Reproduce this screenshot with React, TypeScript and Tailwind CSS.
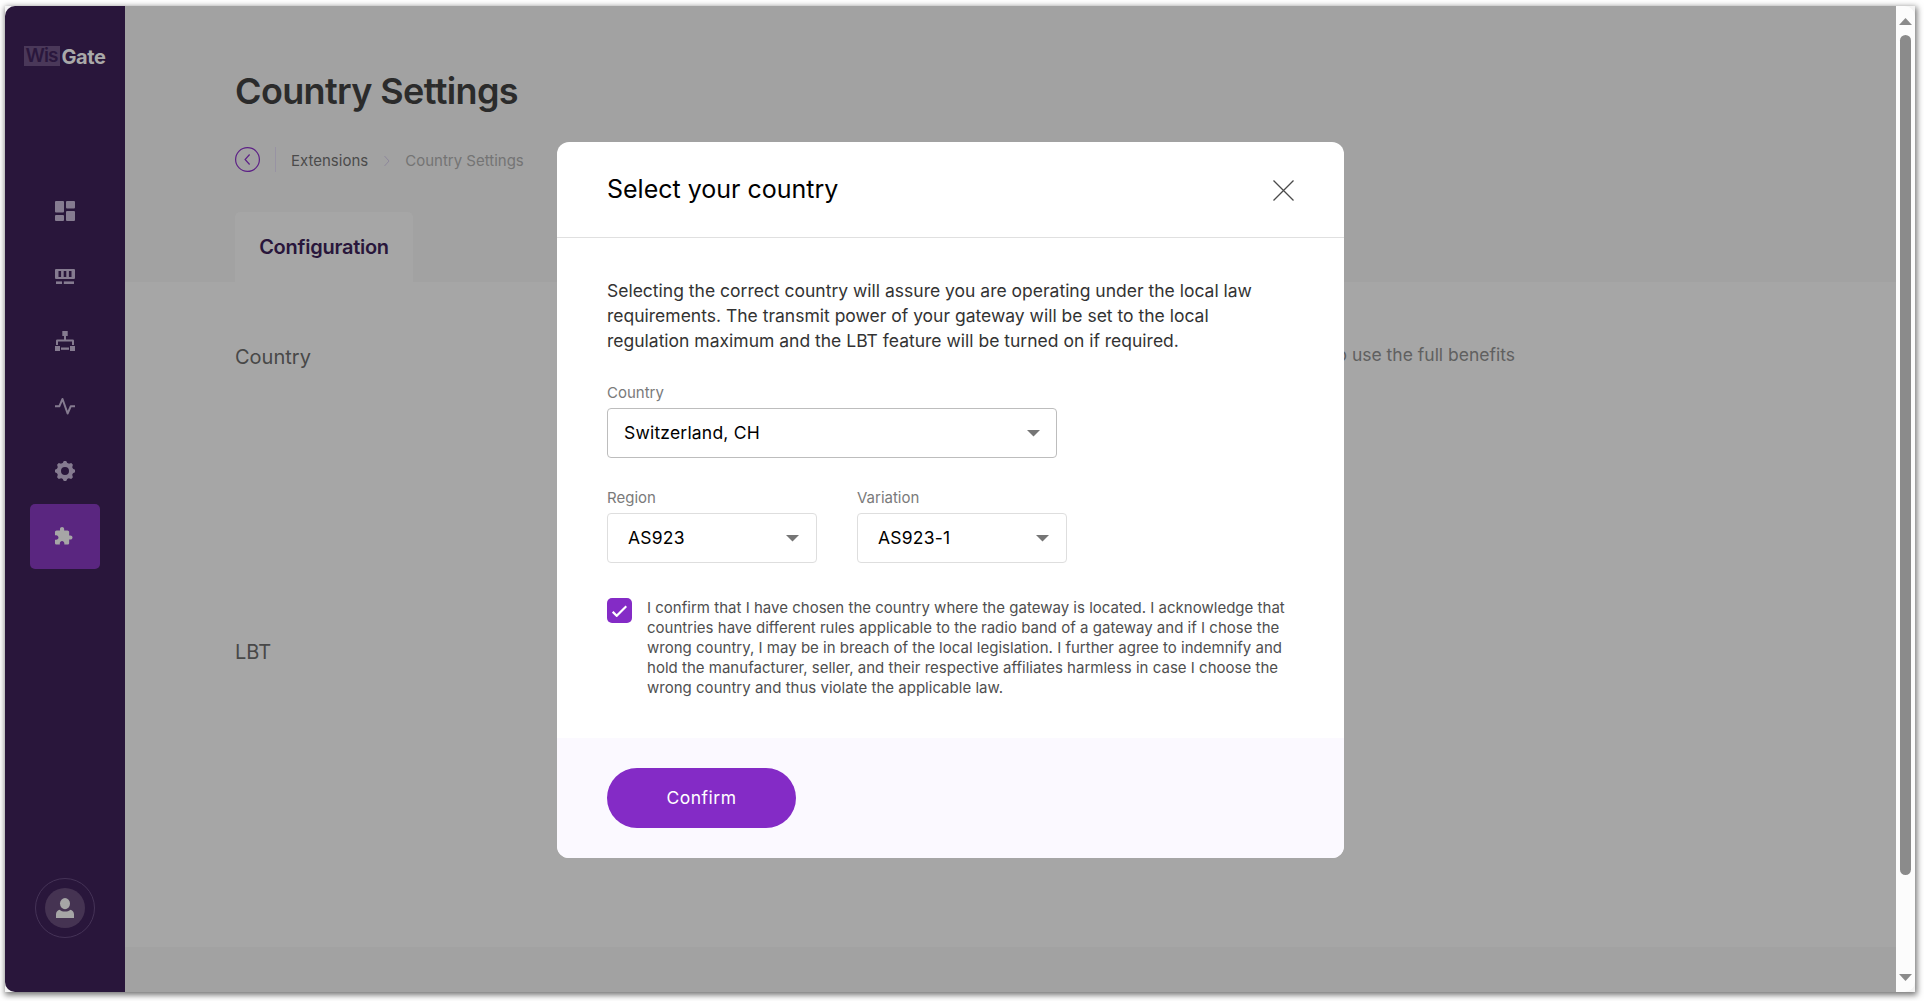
import React from "react";

function NavTile({ active = false, children }: { active?: boolean; children: React.ReactNode }) {
  return (
    <a
      className={
        active
          ? "block h-[65px] w-[70px] rounded-[5px] bg-[#5a2680] text-[#a6a6a6]"
          : "block h-[65px] w-[70px] text-[#857b90]"
      }
    >
      <svg viewBox="0 0 70 65" width="70" height="65" fill="currentColor">
        {children}
      </svg>
    </a>
  );
}

function Sidebar() {
  return (
    <aside className="flex w-[120px] shrink-0 flex-col items-center bg-[#29163b]">
      <div className="mt-[40px] flex h-5 w-[83px] items-center text-[19px] leading-5">
        <span className="flex h-5 w-[36px] shrink-0 items-center justify-center bg-[#4a3859] font-semibold tracking-[-0.9px] text-[#2a173d]">
          Wis
        </span>
        <span className="relative top-px ml-[2px] text-[20px] font-bold tracking-[-0.4px] text-[#a9a9a9]">Gate</span>
      </div>

      <nav className="mt-[113px] flex flex-col">
        <NavTile>
          <rect x="25" y="22" width="9" height="11.5" rx="1" />
          <rect x="25" y="36" width="9" height="6" rx="1" />
          <rect x="36" y="22" width="9" height="7.5" rx="1" />
          <rect x="36" y="32" width="9" height="10" rx="1" />
        </NavTile>
        <NavTile>
          <path
            fillRule="evenodd"
            d="M26 25h18a1 1 0 0 1 1 1v8a1 1 0 0 1-1 1H26a1 1 0 0 1-1-1v-8a1 1 0 0 1 1-1zM28.5 27v6h2.6v-6zM33.7 27v6h2.6v-6zM38.9 27v6h2.6v-6z"
          />
          <rect x="26" y="37.4" width="6" height="2.6" />
          <rect x="33.8" y="37.4" width="10.2" height="2.6" />
        </NavTile>
        <NavTile>
          <rect x="32.3" y="22" width="5.4" height="5" />
          <rect x="34" y="27" width="2" height="5" />
          <path d="M26 36v-4.2q0-1.3 1.3-1.3h15.4q1.3 0 1.3 1.3V36h-2v-3.5H28V36z" />
          <rect x="25" y="37" width="5" height="5" />
          <rect x="40" y="37" width="5" height="5" />
          <rect x="31" y="38.5" width="8" height="2.3" />
        </NavTile>
        <NavTile>
          <polyline
            points="25,32.3 29.3,32.3 32.5,25 37.6,39.5 40.7,32.3 45,32.3"
            fill="none"
            stroke="currentColor"
            strokeWidth="2"
            strokeLinejoin="round"
          />
        </NavTile>
        <NavTile>
          <circle cx="35" cy="32" r="6.1" fill="none" stroke="currentColor" strokeWidth="4.2" />
          {[0, 45, 90, 135, 180, 225, 270, 315].map((angle) => (
            <path key={angle} transform={`rotate(${angle} 35 32)`} d="M32.2 25l1.6-3h2.4l1.6 3z" />
          ))}
        </NavTile>
        <NavTile active>
          <path
            transform="translate(23.3 22.2) scale(0.835)"
            d="M20.5 11H19V7c0-1.1-.9-2-2-2h-4V3.5C13 2.12 11.88 1 10.5 1S8 2.12 8 3.5V5H4c-1.1 0-1.99.9-1.99 2v3.8H3.5c1.49 0 2.7 1.21 2.7 2.7s-1.21 2.7-2.7 2.7H2V20c0 1.1.9 2 2 2h3.8v-1.5c0-1.49 1.21-2.7 2.7-2.7 1.49 0 2.7 1.21 2.7 2.7V22H17c1.1 0 2-.9 2-2v-4h1.5c1.38 0 2.5-1.12 2.5-2.5S21.88 11 20.5 11z"
          />
        </NavTile>
      </nav>

      <div className="mt-auto mb-[54px] flex size-[60px] items-center justify-center rounded-full border border-[#453357]">
        <div className="flex size-10 items-center justify-center rounded-full bg-[#453352]">
          <svg viewBox="0 0 18 20" width="18" height="20" fill="#a6a6a6">
            <ellipse cx="9" cy="5.6" rx="5" ry="5.6" />
            <path d="M0 20v-3.5c0-2.6 1.3-4.2 3.4-4.8 1.6 1.3 3.5 1.9 5.6 1.9s4-.6 5.6-1.9c2.1.6 3.4 2.2 3.4 4.8V20z" />
          </svg>
        </div>
      </div>
    </aside>
  );
}

function Page() {
  return (
    <main className="flex min-w-0 flex-1 flex-col bg-[#a6a6a6]">
      <header className="flex h-[276px] flex-col bg-[#a2a2a2] pl-[110px]">
        <h1 className="mt-[60px] text-[36px] leading-[50px] font-semibold tracking-[-0.63px] text-[#2b2b2b]">
          Country Settings
        </h1>
        <div className="mt-[31px] flex h-[25px] items-center text-[15px]">
          <svg viewBox="0 0 25 25" width="25" height="25" fill="none" stroke="#5d2186" strokeWidth="1.2">
            <circle cx="12.5" cy="12.5" r="11.9" />
            <path d="M14.6 7.5l-4.5 5 4.5 5" />
          </svg>
          <span className="ml-[15px] h-[25px] w-px bg-[#9893a3]" />
          <span className="relative top-[2px] ml-[15px] text-[#4b4b4b]">Extensions</span>
          <svg className="mt-[3px] ml-4 shrink-0" viewBox="0 0 6 12" width="6" height="12" fill="none" stroke="#8e889b" strokeWidth="1">
            <path d="M.5 1l4.5 5-4.5 5" />
          </svg>
          <span className="relative top-[2px] ml-[15px] text-[#747474]">Country Settings</span>
        </div>
        <div className="mt-[40px] flex h-[70px] w-[178px] items-center justify-center rounded-t-[5px] bg-[#a6a6a6] text-[20px] font-semibold tracking-[-0.25px] text-[#29163b]">
          Configuration
        </div>
      </header>

      <section className="flex h-[665px] flex-col pl-[110px] text-[#484848]">
        <div className="mt-[60px] flex h-[295px] items-start">
          <h2 className="w-[822px] text-[20px] leading-[30px]">Country</h2>
          <p className="w-[458px] text-right text-[17.5px] leading-[25px] whitespace-nowrap text-[#606060]">
            Select your country to use the full benefits
          </p>
        </div>
        <h2 className="text-[20px] leading-[30px]">LBT</h2>
      </section>
      <footer className="flex-1 bg-[#a2a2a2]" />
    </main>
  );
}

function Scrollbar() {
  return (
    <div className="flex w-[19px] shrink-0 flex-col items-center rounded-r-[10px] bg-[#fcfcfc] pt-3 pb-[11px]">
      <svg viewBox="0 0 13 7" width="13" height="7" fill="#8b8b8b">
        <path d="M6.5 0L13 7H0z" />
      </svg>
      <div className="mt-[10px] h-[840px] w-[11px] rounded-full bg-[#8b8b8b]" />
      <svg className="mt-auto" viewBox="0 0 13 7" width="13" height="7" fill="#8b8b8b">
        <path d="M0 0h13L6.5 7z" />
      </svg>
    </div>
  );
}

function Select({ label, value, box }: { label: string; value: string; box: string }) {
  return (
    <div className="flex flex-col">
      <span className="h-5 text-[15px] leading-5 text-[#7a7a7a]">{label}</span>
      <div
        className={`mt-[5px] flex h-[50px] items-center justify-between rounded-[4px] border bg-white text-[17.5px] tracking-[0.2px] text-black ${box}`}
      >
        <span>{value}</span>
        <svg viewBox="0 0 13 7" width="13" height="7" fill="#757575">
          <path d="M0 0h13L6.5 6.5z" />
        </svg>
      </div>
    </div>
  );
}

function CountryDialog() {
  return (
    <div
      role="dialog"
      className="absolute top-[142px] left-[557px] flex h-[716px] w-[787px] flex-col overflow-hidden rounded-[12px] bg-white"
    >
      <div className="flex h-[96px] shrink-0 items-center justify-between border-b border-[#e0e0e0] pr-[50px] pl-[50px]">
        <h2 className="text-[25px] text-black">Select your country</h2>
        <svg className="mt-[2px]" viewBox="0 0 21 21" width="21" height="21" stroke="#4a4a4a" strokeWidth="1.25">
          <path d="M.5.5l20 20M20.5.5l-20 20" />
        </svg>
      </div>

      <div className="flex flex-1 flex-col pt-[40px] pl-[50px]">
        <p className="text-[17.5px] leading-[25px] text-[#333333]">
          Selecting the correct country will assure you are operating under the local law
          <br />
          requirements. The transmit power of your gateway will be set to the local
          <br />
          regulation maximum and the LBT feature will be turned on if required.
        </p>
        <div className="mt-[30px] flex">
          <Select label="Country" value="Switzerland, CH" box="w-[450px] border-[#bdbdbd] pr-[16px] pl-[16px]" />
        </div>
        <div className="mt-[30px] flex gap-[40px]">
          <Select label="Region" value="AS923" box="w-[210px] border-[#dedede] pr-[17px] pl-[20px]" />
          <Select label="Variation" value="AS923-1" box="w-[210px] border-[#dedede] pr-[17px] pl-[20px]" />
        </div>
        <div className="mt-[35px] flex gap-[15px]">
          <span className="flex size-[25px] shrink-0 items-center justify-center rounded-[5px] bg-[#842bc6]">
            <svg viewBox="0 0 15 12" width="15" height="12" fill="none" stroke="#ffffff" strokeWidth="2.2">
              <path d="M.7 6.8l4 4L14.3 1.2" />
            </svg>
          </span>
          <p className="text-[15px] leading-5 tracking-[0.015px] whitespace-nowrap text-[#4f4f4f]">
            I confirm that I have chosen the country where the gateway is located. I acknowledge that
            <br />
            countries have different rules applicable to the radio band of a gateway and if I chose the
            <br />
            wrong country, I may be in breach of the local legislation. I further agree to indemnify and
            <br />
            hold the manufacturer, seller, and their respective affiliates harmless in case I choose the
            <br />
            wrong country and thus violate the applicable law.
          </p>
        </div>
      </div>

      <div className="flex h-[120px] shrink-0 items-center bg-[#fbf9ff] pl-[50px]">
        <button className="h-[60px] w-[189px] rounded-full bg-[#842bc6] text-[17.5px] tracking-[0.5px] text-white">
          Confirm
        </button>
      </div>
    </div>
  );
}

export default function App() {
  return (
    <div className="relative h-screen w-screen overflow-hidden bg-white pt-[6px] pl-[5px] font-['Inter',sans-serif]">
      <div className="h-[986px] w-[1910px] bg-[#f4f4f4] shadow-[1px_2px_6px_1px_rgba(0,0,0,0.55)]">
        <div className="flex h-full w-full overflow-hidden rounded-[10px]">
          <Sidebar />
          <Page />
          <Scrollbar />
        </div>
      </div>
      <CountryDialog />
    </div>
  );
}
